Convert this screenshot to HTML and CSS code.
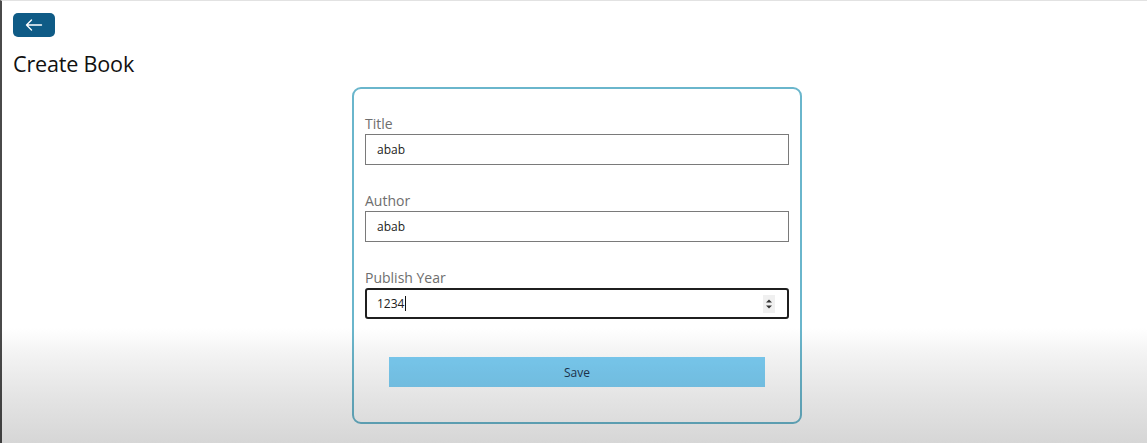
FILE: index.html
```html
<!DOCTYPE html>
<html>
<head>
<meta charset="utf-8">
<link rel="stylesheet" href="styles.css">
</head>
<body>
<div class="page">
  <button class="back" aria-label="Back">
    <svg width="18" height="12" viewBox="0 0 18 12"><path d="M1.5 6H16.5M1.5 6L6.5 1M1.5 6L6.5 11" fill="none" stroke="#fff" stroke-width="1.4" stroke-linecap="round" stroke-linejoin="round"/></svg>
  </button>
  <h1 class="title">Create Book</h1>
  <div class="wrap">
    <form class="card">
      <div class="field">
        <label class="label">Title</label>
        <div class="input">abab</div>
      </div>
      <div class="field">
        <label class="label">Author</label>
        <div class="input">abab</div>
      </div>
      <div class="field">
        <label class="label">Publish Year</label>
        <div class="input focused"><span>1234<span class="caret"></span></span>
          <span class="spin">
            <svg width="8" height="12" viewBox="0 0 8 12"><path d="M1 4.5L4 1.5L7 4.5Z" fill="#333"/><path d="M1 7.5L4 10.5L7 7.5Z" fill="#333"/></svg>
          </span>
        </div>
      </div>
      <div class="actions">
        <button type="button" class="save">Save</button>
      </div>
    </form>
  </div>
</div>
<div class="shade"></div>
</body>
</html>
```

FILE: styles.css
```css
html, body {
  margin: 0;
  padding: 0;
  height: 100%;
}
body {
  background: #fff;
  font-family: "Open Sans", "Noto Sans", sans-serif;
  border-left: 2px solid #4a4a4a;
  border-top: 1px solid #e2e2e2;
  box-sizing: border-box;
  overflow: hidden;
}
.page {
  padding: 12px 11px;
}
.back {
  display: flex;
  align-items: center;
  justify-content: center;
  width: 42px;
  height: 24px;
  padding: 0;
  border: none;
  border-radius: 5px;
  background: #0f5b86;
  cursor: pointer;
}
.title {
  margin: 13px 0 0;
  font-size: 21.6px;
  font-weight: 400;
  line-height: 28px;
  color: #111;
  letter-spacing: -0.2px;
}
.wrap {
  display: flex;
  justify-content: center;
  padding-left: 5px;
  margin-top: 9px;
}
.card {
  width: 450px;
  border: 2px solid #6ab6cc;
  border-radius: 9px;
  padding: 25px 11px 35px;
  box-sizing: border-box;
  display: flex;
  flex-direction: column;
}
.field {
  display: flex;
  flex-direction: column;
  margin-bottom: 26px;
}
.field:nth-child(3) {
  margin-bottom: 38px;
}
.label {
  font-size: 14px;
  line-height: 20px;
  color: #6e6e6e;
}
.input {
  height: 31px;
  box-sizing: border-box;
  border: 1px solid #7a7a7a;
  padding: 0 11px;
  font-size: 12px;
  color: #222;
  display: flex;
  align-items: center;
  justify-content: space-between;
}
.input.focused {
  border: 2px solid #1f1f1f;
  border-radius: 3px;
  padding: 0 10px;
}
.caret {
  display: inline-block;
  width: 1px;
  height: 15px;
  background: #111;
  vertical-align: -3px;
  margin-left: 1px;
}
.spin {
  display: flex;
  align-items: center;
  justify-content: center;
  width: 12px;
  height: 18px;
  background: #f0f0f0;
  margin-right: 2px;
}
.actions {
  display: flex;
  justify-content: center;
}
.save {
  width: 376px;
  height: 30px;
  border: none;
  background: #7ccff6;
  color: #1d3550;
  font-family: "Open Sans", "Noto Sans", sans-serif;
  font-size: 12px;
  cursor: pointer;
}
.shade {
  position: fixed;
  left: 0;
  right: 0;
  bottom: 0;
  height: 115px;
  pointer-events: none;
  mix-blend-mode: multiply;
  background: linear-gradient(to bottom, #ffffff 0%, #f2f2f2 25%, #e4e4e4 60%, #d6d6d6 100%);
}
```
